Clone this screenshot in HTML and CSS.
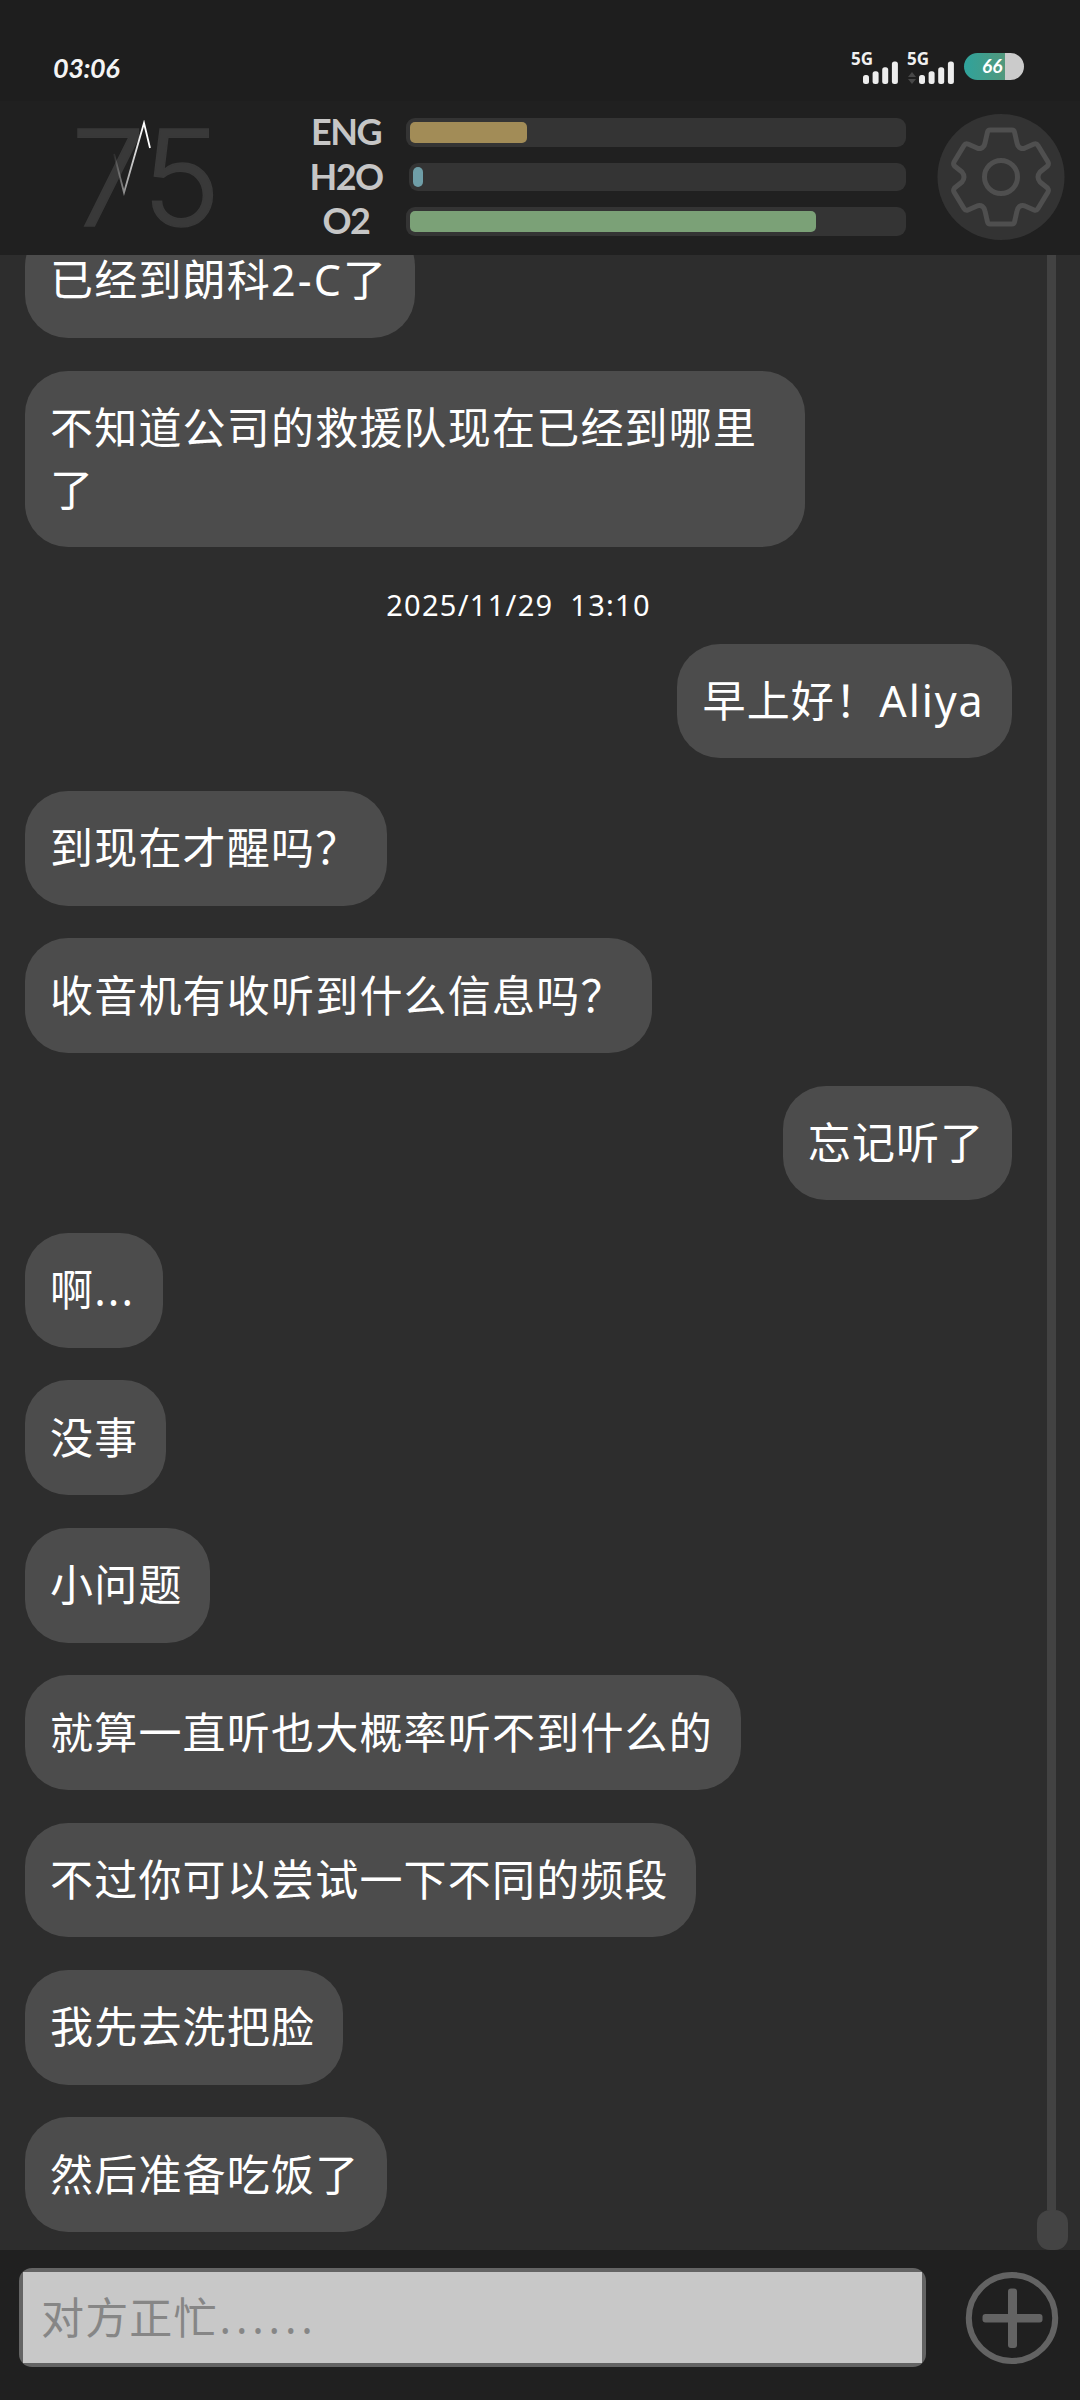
FILE: index.html
```html
<!DOCTYPE html>
<html lang="zh-CN">
<head>
<meta charset="utf-8">
<title>Aliya</title>
<link rel="stylesheet" href="styles.css">
</head>
<body>
<div class="app">
  <div class="status">
    <span class="clock">03:06</span>
    <div class="status-icons">
      <div class="signal">
        <span class="net">5G</span>
        <svg class="bars" width="36" height="23" viewBox="0 0 36 23"><g fill="#ededed"><rect x="0" y="14" width="6" height="9" rx="2.5"/><rect x="9.6" y="10.3" width="6" height="12.7" rx="2.5"/><rect x="19.2" y="6.3" width="6" height="16.7" rx="2.5"/><rect x="28.9" y="0.5" width="6" height="22.5" rx="2.5"/></g></svg>
      </div>
      <div class="signal">
        <span class="net">5G</span>
        <svg class="arrows" width="8" height="12" viewBox="0 0 8 12"><path d="M4 0L8 5H0zM4 12L0 7H8z" fill="#484848"/></svg>
        <svg class="bars" width="36" height="23" viewBox="0 0 36 23"><g fill="#ededed"><rect x="0" y="14" width="6" height="9" rx="2.5"/><rect x="9.6" y="10.3" width="6" height="12.7" rx="2.5"/><rect x="19.2" y="6.3" width="6" height="16.7" rx="2.5"/><rect x="28.9" y="0.5" width="6" height="22.5" rx="2.5"/></g></svg>
      </div>
      <div class="battery"><span class="level">66</span></div>
    </div>
  </div>

  <header class="vitals">
    <div class="pulse">
      <span class="bpm">75</span>
      <svg class="beat" width="50" height="80" viewBox="0 0 50 80">
        <defs><linearGradient id="fade" x1="0" x2="1" y1="0" y2="0"><stop offset="0" stop-color="#fff" stop-opacity="0.05"/><stop offset="0.35" stop-color="#fff" stop-opacity="0.6"/><stop offset="0.8" stop-color="#fff"/></linearGradient></defs>
        <path d="M6 34L16 72.500L36 3L42 28" fill="none" stroke="url(#fade)" stroke-width="1.8"/>
      </svg>
    </div>
    <div class="meters">
      <span class="label">ENG</span><div class="track"><div class="fill eng"></div></div>
      <span class="label">H2O</span><div class="track short"><div class="fill h2o"></div></div>
      <span class="label">O2</span><div class="track"><div class="fill o2"></div></div>
    </div>
    <button class="settings" aria-label="设置">
      <svg width="128" height="128" viewBox="0 0 128 128">
        <ellipse cx="64" cy="64" rx="63.500" ry="63" fill="#333"/>
        <g fill="none" stroke="#4f4f4f" stroke-width="5" stroke-linejoin="round">
          <path d="M53 17H75Q77 17 77.500 19L80 30Q80.500 33 82.500 34.500L84 35.300Q86 36 88 35L97 31Q99.500 30 101 32.500L111 49Q112 51 110.500 53L103 59Q101 61.500 101 64Q101 66.500 103 69L110.500 75Q112 77 111 79L101 95.500Q99.500 98 97 97L88 93Q86 92 84 92.700L82.500 93.500Q80.500 95 80 98L77.500 109Q77 111 75 111H53Q51 111 50.500 109L48 98Q47.500 95 45.500 93.500L44 92.700Q42 92 40 93L31 97Q28.500 98 27 95.500L17 79Q16 77 17.500 75L25 69Q27 66.500 27 64Q27 61.500 25 59L17.500 53Q16 51 17 49L27 32.500Q28.500 30 31 31L40 35Q42 36 44 35.300L45.500 34.500Q47.500 33 48 30L50.500 19Q51 17 53 17Z"/>
          <circle cx="64" cy="64" r="16.500"/>
        </g>
      </svg>
    </button>
  </header>

  <main class="chat">
    <div class="messages">
      <div class="bubble">已经到朗科<span class="latin">2-C</span>了</div>
      <div class="bubble">不知道公司的救援队现在已经到哪里了</div>
      <time class="stamp">2025/11/29 13:10</time>
      <div class="bubble mine">早上好！<span class="name">Aliya</span></div>
      <div class="bubble">到现在才醒吗？</div>
      <div class="bubble">收音机有收听到什么信息吗？</div>
      <div class="bubble mine">忘记听了</div>
      <div class="bubble">啊<span class="latin">...</span></div>
      <div class="bubble">没事</div>
      <div class="bubble">小问题</div>
      <div class="bubble">就算一直听也大概率听不到什么的</div>
      <div class="bubble">不过你可以尝试一下不同的频段</div>
      <div class="bubble">我先去洗把脸</div>
      <div class="bubble">然后准备吃饭了</div>
    </div>
    <div class="scrollbar"><div class="rail"></div><div class="thumb"></div></div>
  </main>

  <footer class="composer">
    <div class="field"><div class="entry">对方正忙<span class="dots">......</span></div></div>
    <button class="add" aria-label="添加">
      <svg width="94" height="94" viewBox="0 0 94 94"><ellipse cx="47" cy="47" rx="43.200" ry="43" fill="none" stroke="#636363" stroke-width="6"/><rect x="17.500" y="43" width="60" height="8.500" rx="3" fill="#636363"/><rect x="43" y="17.500" width="9" height="59.500" rx="3" fill="#636363"/></svg>
    </button>
  </footer>
</div>
</body>
</html>
```
FILE: styles.css
```css
* { box-sizing: border-box; }
body { margin: 0; background: #202020; font-family: "Noto Sans", "Noto Sans CJK SC", sans-serif; color: #fff; }
button { background: none; border: 0; padding: 0; display: block; }
svg { display: block; }
.app { width: 1080px; height: 2400px; display: flex; flex-direction: column; overflow: hidden; }

.status { height: 101px; flex: none; background: #1e1e1e; display: flex; justify-content: space-between; align-items: flex-end; padding: 0 56px 17px 53px; }
.clock { font: italic 700 27px/32px Lato, sans-serif; color: #f4f4f4; letter-spacing: -0.4px; }
.status-icons { display: flex; align-items: flex-end; gap: 8px; }
.signal { display: flex; align-items: flex-end; width: 48px; height: 34px; justify-content: flex-end; position: relative; }
.net { position: absolute; left: 0; top: -1px; font: 700 17px/20px "Noto Sans", sans-serif; color: #f0f0f0; }
.arrows { margin-right: 3px; }
.battery { width: 60px; height: 27px; margin: 0 0 4px 1px; border-radius: 14px; background: linear-gradient(90deg, #2fa39c, #52987c 41px, #cbcbcb 41px); padding-left: 18px; }
.level { display: block; font: italic 700 19px/25px Lato, sans-serif; }

.vitals { height: 154px; flex: none; background: #202020; display: grid; grid-template-columns: 238px 600px 1fr; padding: 12px 15px 0 73px; }
.pulse { position: relative; }
.bpm { display: block; font: 300 133px/136px Inter, sans-serif; color: #393939; -webkit-text-stroke: 1.500px #393939; margin: -3px 0 0 -2px; letter-spacing: -2px; }
.beat { position: absolute; left: 35px; top: 7px; }
.meters { display: grid; grid-template-columns: 70px 500px; column-gap: 25px; grid-auto-rows: 29px; row-gap: 15.500px; padding-top: 5px; }
.label { font: 700 36px/27px Lato, sans-serif; color: #c6c6c6; display: flex; justify-content: center; white-space: nowrap; letter-spacing: -1.500px; }
.track { background: #343434; border-radius: 9px; padding: 4px; }
.short { margin-left: 3px; height: 28px; }
.fill { height: 21px; border-radius: 5px; }
.eng { width: 117px; background: #a28c57; }
.h2o { width: 10px; height: 20px; background: #6f9ea7; }
.o2 { width: 406px; background: #7ba177; }
.settings { align-self: start; justify-self: end; }

.chat { height: 1995px; flex: none; background: #2d2d2d; display: flex; justify-content: space-between; overflow: hidden; }
.messages { width: 987px; margin-left: 25px; padding-bottom: 18px; display: flex; flex-direction: column; justify-content: flex-end; align-items: flex-start; gap: 32.700px; }
.bubble { flex: none; max-width: 780px; padding: 26.350px 27.500px 26.350px 25px; border-radius: 43px; background: #4c4c4c; font-size: 43px; line-height: 62px; letter-spacing: 1.200px; }
.latin { letter-spacing: 2.100px; }
.name { letter-spacing: 1.900px; }
.mine { align-self: flex-end; }
.stamp { align-self: center; height: 31px; font-size: 29px; line-height: 49px; letter-spacing: 1.300px; word-spacing: 8px; }
.scrollbar { width: 31px; margin-right: 12px; display: flex; flex-direction: column; align-items: center; }
.rail { flex: 1; width: 9px; background: #424242; margin-right: 2px; }
.thumb { height: 40px; width: 31px; border-radius: 13px; background: #444; }

.composer { flex: 1; display: flex; align-items: flex-start; justify-content: space-between; padding: 18px 21px 0 19px; }
.field { width: 907px; height: 99px; padding: 4px; border-radius: 13px; background: #646464; }
.entry { height: 91px; background: #c8c8c8; padding-left: 18px; font-size: 43px; line-height: 92px; letter-spacing: 1.150px; color: #868686; }
.dots { letter-spacing: 4.800px; margin-left: 2px; }
.add { margin-top: 3px; }
```
